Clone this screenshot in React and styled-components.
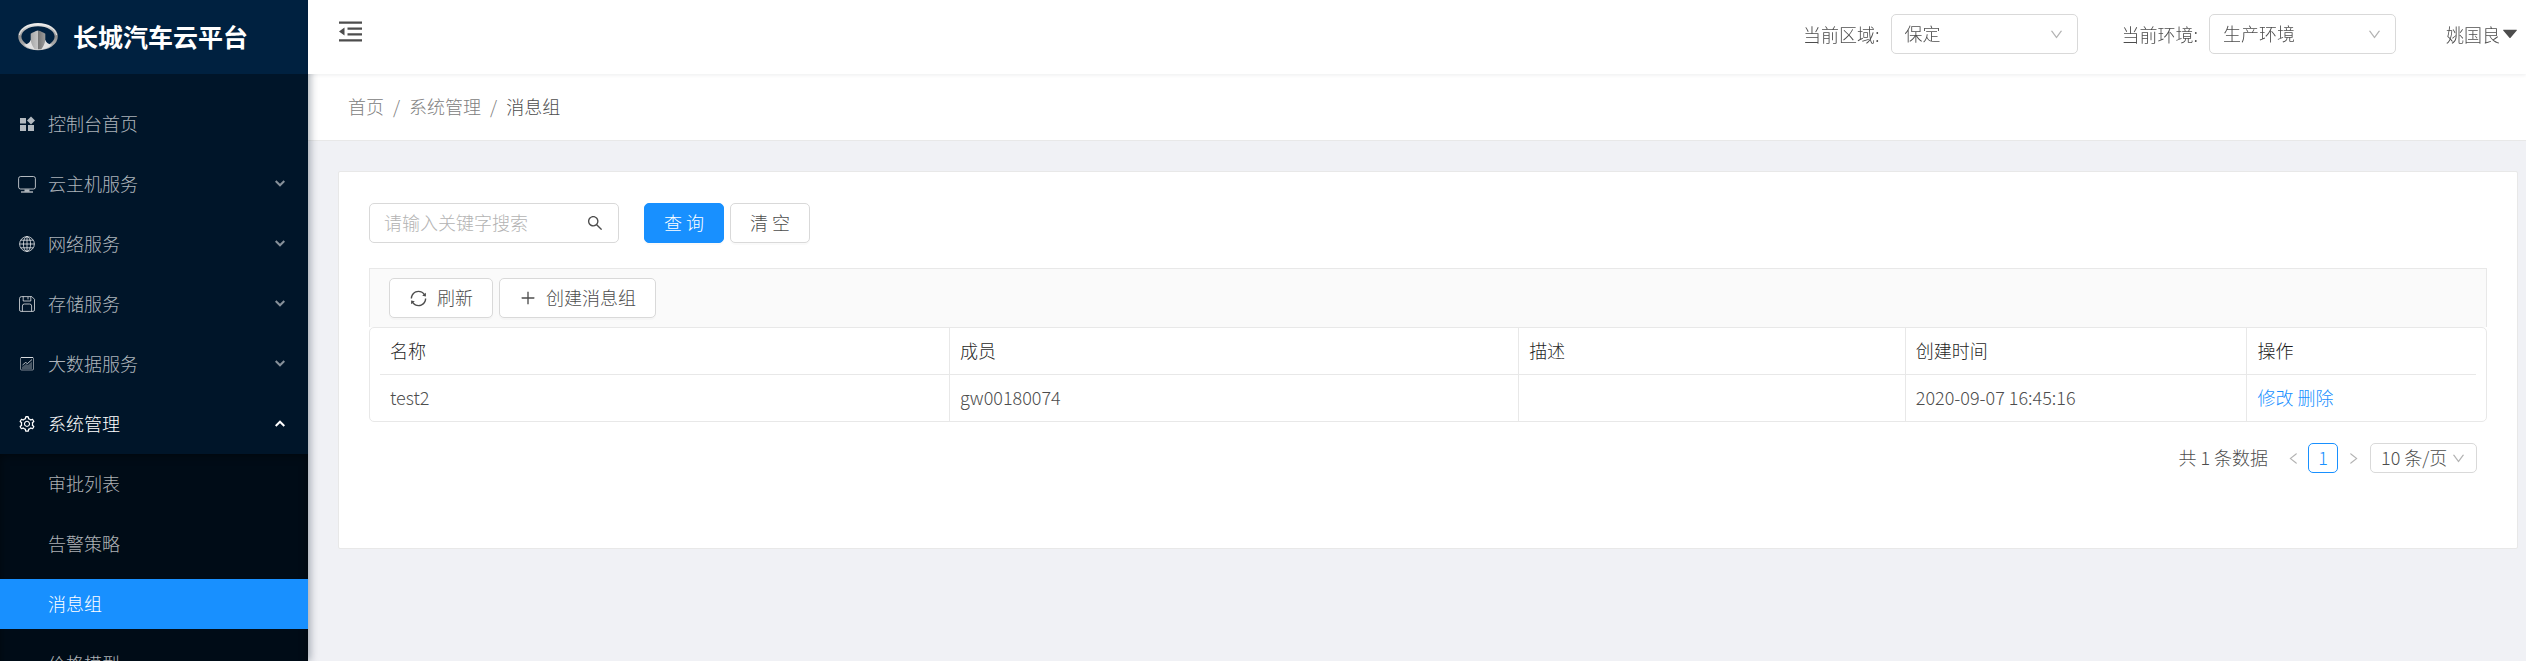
import React from "react";
import styled, { createGlobalStyle, css } from "styled-components";
import {
  AiOutlineSetting,
  AiOutlineSync,
  AiOutlinePlus,
  AiOutlineSearch,
  AiOutlineDown,
  AiOutlineLeft,
  AiOutlineRight,
  AiFillCaretDown,
} from "react-icons/ai";

const color = {
  primary: "#1890ff",
  siderHead: "#002140",
  sider: "#001529",
  submenu: "#000c17",
  page: "#f0f1f5",
  line: "#e8e8e8",
  control: "#d9d9d9",
  text: "#4d4d4d",
  heading: "#1f1f1f",
  muted: "#808080",
  hint: "#b3b3b3",
};

const GlobalStyle = createGlobalStyle`
  *, *::before, *::after { box-sizing: border-box; }
  body {
    margin: 0;
    background: ${color.page};
    color: ${color.text};
    font-family: "Noto Sans CJK SC", "Noto Sans", sans-serif;
    font-size: 18px;
    font-weight: 300;
    line-height: 26px;
  }
  button, input, select { font: inherit; color: inherit; margin: 0; }
  svg { display: block; flex: none; }
`;

const Layout = styled.div`
  display: flex;
  height: 100vh;
  overflow: hidden;
`;

const Sider = styled.aside`
  flex: none;
  width: 308px;
  overflow: hidden auto;
  scrollbar-width: none;
  background: ${color.sider};
  box-shadow: 2px 0 8px rgba(0, 21, 41, 0.35);
  z-index: 1;
`;

const Brand = styled.div`
  display: flex;
  align-items: center;
  gap: 15px;
  height: 74px;
  padding-left: 18px;
  background: ${color.siderHead};
`;

const BrandName = styled.h1`
  margin: 0;
  padding-bottom: 2px;
  color: #fff;
  font-size: 25px;
  font-weight: 700;
  line-height: 36px;
`;

const Menu = styled.nav`
  display: flex;
  flex-direction: column;
  padding-top: 20px;
`;

const menuRow = css`
  display: flex;
  align-items: center;
  flex: none;
  width: 100%;
  height: 50px;
  border: 0;
  text-align: left;
  text-decoration: none;
  cursor: pointer;
`;

const MenuItem = styled.button`
  ${menuRow}
  gap: 12px;
  margin: 5px 0;
  padding: 0 23px 0 18px;
  background: transparent;
  color: ${(p) => (p.$open ? "#fff" : "rgba(255, 255, 255, 0.7)")};
`;

const MenuLabel = styled.span`
  flex: 1;
  padding-bottom: 2px;
`;

const SubMenu = styled.div`
  display: flex;
  flex-direction: column;
  gap: 10px;
  padding: 5px 0;
  background: ${color.submenu};
  box-shadow: inset 0 2px 8px rgba(0, 0, 0, 0.45);
`;

const SubItem = styled.a`
  ${menuRow}
  padding: 0 0 2px 48px;
  background: ${(p) => (p.$active ? color.primary : "transparent")};
  color: ${(p) => (p.$active ? "#fff" : "rgba(255, 255, 255, 0.7)")};
`;

const Main = styled.div`
  flex: 1;
  min-width: 0;
  display: flex;
  flex-direction: column;
`;

const Header = styled.header`
  position: relative;
  z-index: 2;
  flex: none;
  display: flex;
  align-items: flex-start;
  height: 74px;
  padding: 14px 6px 0 30px;
  background: #fff;
  box-shadow: 0 1px 4px rgba(0, 21, 41, 0.08);
`;

const PlainButton = styled.button`
  display: flex;
  align-items: center;
  padding: 0;
  border: 0;
  background: transparent;
  cursor: pointer;
`;

const Toggle = styled(PlainButton)`
  height: 35px;
`;

const HeaderTools = styled.div`
  display: flex;
  align-items: center;
  height: 40px;
  margin-left: auto;
`;

const Field = styled.div`
  display: flex;
  align-items: center;
  gap: 11px;
  margin-right: ${(p) => (p.$last ? 50 : 44)}px;
`;

const SelectBox = styled.div`
  display: grid;
  align-items: center;
  width: ${(p) => (p.$small ? 107 : 187)}px;
  height: ${(p) => (p.$small ? 30 : 40)}px;

  & > * { grid-area: 1 / 1; }
  & > svg {
    justify-self: end;
    margin-right: ${(p) => (p.$small ? 11 : 14)}px;
    color: ${color.hint};
    pointer-events: none;
  }
`;

const NativeSelect = styled.select`
  appearance: none;
  width: 100%;
  height: 100%;
  padding: 0 ${(p) => (p.$small ? 10 : 13)}px 2px;
  border: 1px solid ${color.control};
  border-radius: 5px;
  background: #fff;
  outline: none;
`;

const Breadcrumb = styled.nav`
  flex: none;
  display: flex;
  align-items: center;
  gap: 9px;
  height: 67px;
  padding: 0 0 2px 40px;
  border-bottom: 1px solid ${color.line};
  background: #fff;
  color: ${color.muted};
`;

const Crumb = styled.a`
  color: ${(p) => (p.$current ? color.text : color.muted)};
  text-decoration: none;
`;

const Card = styled.main`
  margin: 30px 8px 30px 30px;
  padding: 31px 30px 75px;
  border: 1px solid ${color.line};
  border-radius: 2px;
  background: #fff;
`;

const SearchRow = styled.form`
  display: flex;
  align-items: center;
  gap: 6px;
  margin-bottom: 25px;
`;

const SearchBox = styled.label`
  display: flex;
  align-items: center;
  width: 250px;
  height: 40px;
  margin-right: 19px;
  padding: 0 14px;
  border: 1px solid ${color.control};
  border-radius: 5px;
`;

const SearchInput = styled.input`
  flex: 1;
  min-width: 0;
  padding: 0 0 2px;
  border: 0;
  outline: none;
  background: transparent;
  &::placeholder { color: ${color.hint}; opacity: 1; }
`;

const Button = styled.button`
  display: flex;
  align-items: center;
  justify-content: center;
  gap: 9px;
  height: 40px;
  padding: 0 19px;
  border: 1px solid ${(p) => (p.$primary ? color.primary : color.control)};
  border-radius: 5px;
  background: ${(p) => (p.$primary ? color.primary : "#fff")};
  color: ${(p) => (p.$primary ? "#fff" : color.text)};
  box-shadow: 0 2px 0 rgba(0, 0, 0, 0.02);
  cursor: pointer;
`;

const ButtonText = styled.span`
  padding-bottom: 2px;
`;

const Toolbar = styled.div`
  display: flex;
  gap: 6px;
  padding: 9px 19px;
  border: 1px solid ${color.line};
  border-bottom: 0;
  background: #fafafa;
`;

const TableFrame = styled.div`
  padding: 0 10px;
  border: 1px solid ${color.line};
  border-radius: 5px;
`;

const Table = styled.table`
  width: 100%;
  table-layout: fixed;
  border-collapse: separate;
  border-spacing: 0;
`;

const Th = styled.th`
  height: 47px;
  padding: 0 10px 2px;
  border-bottom: 1px solid ${color.line};
  color: ${color.heading};
  font-weight: inherit;
  text-align: left;
  & + & { border-left: 1px solid ${color.line}; }
`;

const Td = styled.td`
  height: 46px;
  padding: 0 10px 2px;
  & + & { border-left: 1px solid ${color.line}; }
`;

const ActionLink = styled.a`
  color: ${color.primary};
  text-decoration: none;
`;

const Pagination = styled.div`
  display: flex;
  align-items: center;
  justify-content: flex-end;
  margin: 21px 10px 0 0;
`;

const Arrow = styled(PlainButton)`
  justify-content: center;
  width: 30px;
  height: 30px;
  color: ${color.hint};
`;

const Total = styled.span`
  margin-right: 10px;
  padding-bottom: 2px;
`;

const PageNumber = styled.button`
  width: 30px;
  height: 30px;
  padding: 0 0 2px;
  border: 1px solid ${color.primary};
  border-radius: 5px;
  background: #fff;
  color: ${color.primary};
  line-height: 26px;
`;

const SizeSlot = styled.div`
  margin-left: 2px;
`;

const Logo = () => (
  <svg width="40" height="28" viewBox="0 0 40 28" aria-hidden="true">
    <defs>
      <linearGradient id="ring" x1="0" y1="0" x2="0" y2="1">
        <stop offset="0" stopColor="#e4e4e4" />
        <stop offset="0.5" stopColor="#8e8e8e" />
        <stop offset="1" stopColor="#b9b9b9" />
      </linearGradient>
      <linearGradient id="shield" x1="0" y1="0" x2="1" y2="0">
        <stop offset="0" stopColor="#a8a8a8" />
        <stop offset="0.47" stopColor="#c4c4c4" />
        <stop offset="0.53" stopColor="#767676" />
        <stop offset="1" stopColor="#9c9c9c" />
      </linearGradient>
    </defs>
    <ellipse cx="20" cy="13.6" rx="18.2" ry="12" fill="none" stroke="url(#ring)" strokeWidth="3.2" />
    <path d="M1.400 12C3 5 10.500 1.200 20 1.200S37 5 38.600 12" fill="none" stroke="#f0f0f0" strokeWidth="0.900" />
    <path d="M6 21.600C9.500 21.400 11.600 20 12.600 17l3.400 5h8l3.400-5c1 3 3.100 4.400 6.600 4.600C30.500 25.400 25.500 26.800 20 26.800S9.500 25.400 6 21.600z" fill="#e2e2e2" />
    <path d="M20 7.600c2.800.700 5.400 1.900 7.300 3.200v6.700c-.7 3.400-2 6.300-4 8.700h-6.600c-2-2.400-3.300-5.300-4-8.700v-6.700c1.900-1.300 4.500-2.500 7.300-3.200z" fill="url(#shield)" />
  </svg>
);

const FoldIcon = () => (
  <svg width="25" height="22" viewBox="0 0 25 22" fill="currentColor" aria-hidden="true">
    <path d="M1 0.500h23v2.300H1zM9.500 6.400H24v2.300H9.500zM9.500 12.300H24v2.300H9.500zM1 18.200h23v2.300H1zM6.500 6.600v7.800L1 10.500z" />
  </svg>
);

const DashboardIcon = () => (
  <svg width="18" height="18" viewBox="0 0 18 18" fill="currentColor" aria-hidden="true">
    <path d="M2 3h6v5.500H2zM2 10h6v6H2zM10 10h6v6h-6zM13 1.600l4 4-4 4-4-4z" />
  </svg>
);

const MonitorIcon = () => (
  <svg width="18" height="18" viewBox="0 0 18 18" fill="none" stroke="currentColor" aria-hidden="true">
    <rect x="0.600" y="1.500" width="16.800" height="12.500" rx="2" />
    <path d="M6.500 14.500h5v2h-5z" fill="currentColor" stroke="none" />
    <path d="M3 17h12" strokeWidth="1.400" />
  </svg>
);

const GlobeIcon = () => (
  <svg width="18" height="18" viewBox="0 0 18 18" fill="none" stroke="currentColor" aria-hidden="true">
    <circle cx="9" cy="9" r="7.400" />
    <ellipse cx="9" cy="9" rx="3.600" ry="7.400" />
    <path d="M9 1.600v14.800M1.600 9h14.800M2.800 5.200h12.400M2.800 12.800h12.400" />
  </svg>
);

const SaveIcon = () => (
  <svg width="18" height="18" viewBox="0 0 18 18" fill="none" stroke="currentColor" aria-hidden="true">
    <path d="M3.500 1.600h10.300l2.700 2.700v10.600a1.500 1.500 0 0 1-1.500 1.500h-12a1.500 1.500 0 0 1-1.500-1.500v-11.300a2 2 0 0 1 2-2z" />
    <path d="M5.200 1.600v4.400h7.600V1.600M10 2v2.400M4.400 16.400V11a2 2 0 0 1 2-2h5.200a2 2 0 0 1 2 2v5.400" />
  </svg>
);

const ChartIcon = () => (
  <svg width="18" height="18" viewBox="0 0 18 18" fill="none" stroke="currentColor" aria-hidden="true">
    <rect x="2.500" y="2.500" width="13" height="12.500" rx="1" opacity="0.7" />
    <path d="M3 2.500h12" />
    <path d="M4.500 10l3-2.500 2 1 4.500-4" />
    <path d="M4 14v-2l4-3 2 1 4-3.500V14z" fill="currentColor" stroke="none" opacity="0.4" />
  </svg>
);

const Chevron = ({ up }) => (
  <svg
    width="10"
    height="8"
    viewBox="0 0 10 8"
    fill="none"
    stroke="currentColor"
    strokeWidth="2"
    opacity={up ? 1 : 0.75}
    aria-hidden="true"
  >
    <path d={up ? "M0.700 6L5 1.700 9.300 6" : "M0.700 1L5 5.300 9.300 1"} />
  </svg>
);

const menu = [
  { label: "控制台首页", icon: <DashboardIcon />, leaf: true },
  { label: "云主机服务", icon: <MonitorIcon /> },
  { label: "网络服务", icon: <GlobeIcon /> },
  { label: "存储服务", icon: <SaveIcon /> },
  { label: "大数据服务", icon: <ChartIcon /> },
  { label: "系统管理", icon: <AiOutlineSetting size={18} />, open: true },
];

const subMenu = ["审批列表", "告警策略", "消息组", "价格模型"];

const columns = [
  { title: "名称", width: "27.15%" },
  { title: "成员", width: "27.15%" },
  { title: "描述", width: "18.45%" },
  { title: "创建时间", width: "16.3%" },
  { title: "操作", width: "10.95%" },
];

const rows = [{ name: "test2", member: "gw00180074", note: "", created: "2020-09-07 16:45:16" }];

const Select = ({ id, value, small, label }) => (
  <SelectBox $small={small}>
    <NativeSelect id={id} $small={small} aria-label={label} defaultValue={value}>
      <option value={value}>{value}</option>
    </NativeSelect>
    <AiOutlineDown size={15} />
  </SelectBox>
);

export default function App() {
  return (
    <>
      <GlobalStyle />
      <Layout>
        <Sider>
          <Brand>
            <Logo />
            <BrandName>长城汽车云平台</BrandName>
          </Brand>
          <Menu>
            {menu.map((m) => (
              <MenuItem key={m.label} type="button" $open={m.open} aria-expanded={m.leaf ? undefined : !!m.open}>
                {m.icon}
                <MenuLabel>{m.label}</MenuLabel>
                {!m.leaf && <Chevron up={m.open} />}
              </MenuItem>
            ))}
            <SubMenu>
              {subMenu.map((label) => (
                <SubItem key={label} href="#" $active={label === "消息组"}>
                  {label}
                </SubItem>
              ))}
            </SubMenu>
          </Menu>
        </Sider>

        <Main>
          <Header>
            <Toggle type="button" aria-label="收起菜单">
              <FoldIcon />
            </Toggle>
            <HeaderTools>
              <Field>
                <label htmlFor="region">当前区域:</label>
                <Select id="region" value="保定" />
              </Field>
              <Field $last>
                <label htmlFor="env">当前环境:</label>
                <Select id="env" value="生产环境" />
              </Field>
              <PlainButton type="button">
                姚国良
                <AiFillCaretDown size={20} />
              </PlainButton>
            </HeaderTools>
          </Header>

          <Breadcrumb aria-label="breadcrumb">
            <Crumb href="#">首页</Crumb>
            <span>/</span>
            <Crumb href="#">系统管理</Crumb>
            <span>/</span>
            <Crumb href="#" $current aria-current="page">消息组</Crumb>
          </Breadcrumb>

          <Card>
            <SearchRow onSubmit={(e) => e.preventDefault()}>
              <SearchBox>
                <SearchInput type="text" placeholder="请输入关键字搜索" aria-label="关键字" />
                <AiOutlineSearch size={18} />
              </SearchBox>
              <Button type="submit" $primary>
                <ButtonText>查 询</ButtonText>
              </Button>
              <Button type="reset">
                <ButtonText>清 空</ButtonText>
              </Button>
            </SearchRow>

            <Toolbar>
              <Button type="button">
                <AiOutlineSync size={19} />
                <ButtonText>刷新</ButtonText>
              </Button>
              <Button type="button">
                <AiOutlinePlus size={18} />
                <ButtonText>创建消息组</ButtonText>
              </Button>
            </Toolbar>
            <TableFrame>
              <Table>
                <colgroup>
                  {columns.map((c) => (
                    <col key={c.title} width={c.width} />
                  ))}
                </colgroup>
                <thead>
                  <tr>
                    {columns.map((c) => (
                      <Th key={c.title} scope="col">{c.title}</Th>
                    ))}
                  </tr>
                </thead>
                <tbody>
                  {rows.map((r) => (
                    <tr key={r.name}>
                      <Td>{r.name}</Td>
                      <Td>{r.member}</Td>
                      <Td>{r.note}</Td>
                      <Td>{r.created}</Td>
                      <Td>
                        <ActionLink href="#">修改</ActionLink> <ActionLink href="#">删除</ActionLink>
                      </Td>
                    </tr>
                  ))}
                </tbody>
              </Table>
            </TableFrame>

            <Pagination>
              <Total>共 1 条数据</Total>
              <Arrow type="button" aria-label="上一页"><AiOutlineLeft size={15} /></Arrow>
              <PageNumber type="button" aria-current="page">1</PageNumber>
              <Arrow type="button" aria-label="下一页"><AiOutlineRight size={15} /></Arrow>
              <SizeSlot>
                <Select id="page-size" value="10 条/页" small label="每页条数" />
              </SizeSlot>
            </Pagination>
          </Card>
        </Main>
      </Layout>
    </>
  );
}
